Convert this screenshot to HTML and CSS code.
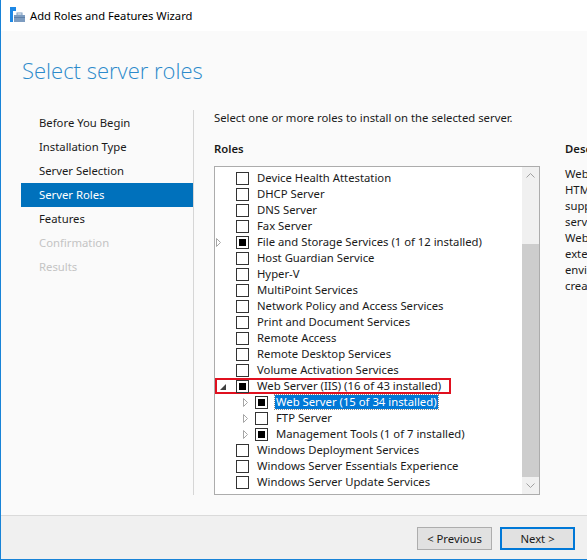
FILE: index.html
```html
<!DOCTYPE html>
<html lang="en">
<head>
<meta charset="utf-8">
<title>Add Roles and Features Wizard</title>
<link rel="stylesheet" href="styles.css">
</head>
<body>
<div class="window">
  <header class="titlebar">
    <svg class="app-icon" width="17" height="16" viewBox="0 0 17 16">
      <rect x="1" y="0" width="6" height="4" fill="#1e88e5"/>
      <rect x="1" y="4" width="3" height="11" fill="#1e88e5"/>
      <rect x="5" y="8" width="11" height="7" fill="#7d9cc0"/>
      <rect x="8" y="6" width="5" height="2" fill="none" stroke="#7d9cc0" stroke-width="1"/>
      <rect x="5" y="10" width="11" height="1" fill="#5f80a8"/>
    </svg>
    <span class="title">Add Roles and Features Wizard</span>
  </header>

  <main class="content">
    <h1 class="page-title">Select server roles</h1>
    <div class="columns">
      <nav class="steps">
        <div class="step">Before You Begin</div>
        <div class="step">Installation Type</div>
        <div class="step">Server Selection</div>
        <div class="step current">Server Roles</div>
        <div class="step">Features</div>
        <div class="step disabled">Confirmation</div>
        <div class="step disabled">Results</div>
      </nav>

      <section class="pane">
        <p class="intro">Select one or more roles to install on the selected server.</p>
        <div class="label">Roles</div>
        <div class="label">Description</div>

        <div class="listbox">
          <div class="viewport">
            <ul class="tree">
              <li class="row"><span class="exp"></span><span class="cb"></span>Device Health Attestation</li>
              <li class="row"><span class="exp"></span><span class="cb"></span>DHCP Server</li>
              <li class="row"><span class="exp"></span><span class="cb"></span>DNS Server</li>
              <li class="row"><span class="exp"></span><span class="cb"></span>Fax Server</li>
              <li class="row"><span class="exp"><svg class="tri-closed" width="5" height="9" viewBox="0 0 5 9"><path d="M0.5 0.5 L4.5 4.5 L0.5 8.5 Z" fill="none" stroke="#a6a6a6"/></svg></span><span class="cb partial"></span>File and Storage Services (1 of 12 installed)</li>
              <li class="row"><span class="exp"></span><span class="cb"></span>Host Guardian Service</li>
              <li class="row"><span class="exp"></span><span class="cb"></span>Hyper-V</li>
              <li class="row"><span class="exp"></span><span class="cb"></span>MultiPoint Services</li>
              <li class="row"><span class="exp"></span><span class="cb"></span>Network Policy and Access Services</li>
              <li class="row"><span class="exp"></span><span class="cb"></span>Print and Document Services</li>
              <li class="row"><span class="exp"></span><span class="cb"></span>Remote Access</li>
              <li class="row"><span class="exp"></span><span class="cb"></span>Remote Desktop Services</li>
              <li class="row"><span class="exp"></span><span class="cb"></span>Volume Activation Services</li>
              <li class="row marked"><span class="exp"><svg class="tri-open" width="6" height="6" viewBox="0 0 6 6"><path d="M6 0 L6 6 L0 6 Z" fill="#404040"/></svg></span><span class="cb partial"></span>Web Server (IIS) (16 of 43 installed)</li>
              <li class="row sub"><span class="exp"><svg class="tri-closed" width="5" height="9" viewBox="0 0 5 9"><path d="M0.5 0.5 L4.5 4.5 L0.5 8.5 Z" fill="none" stroke="#a6a6a6"/></svg></span><span class="cb partial"></span><span class="sel">Web Server (15 of 34 installed)</span></li>
              <li class="row sub"><span class="exp"><svg class="tri-closed" width="5" height="9" viewBox="0 0 5 9"><path d="M0.5 0.5 L4.5 4.5 L0.5 8.5 Z" fill="none" stroke="#a6a6a6"/></svg></span><span class="cb"></span>FTP Server</li>
              <li class="row sub"><span class="exp"><svg class="tri-closed" width="5" height="9" viewBox="0 0 5 9"><path d="M0.5 0.5 L4.5 4.5 L0.5 8.5 Z" fill="none" stroke="#a6a6a6"/></svg></span><span class="cb partial"></span>Management Tools (1 of 7 installed)</li>
              <li class="row"><span class="exp"></span><span class="cb"></span>Windows Deployment Services</li>
              <li class="row"><span class="exp"></span><span class="cb"></span>Windows Server Essentials Experience</li>
              <li class="row"><span class="exp"></span><span class="cb"></span>Windows Server Update Services</li>
            </ul>
          </div>
          <div class="scrollbar">
            <div class="sb-btn"><svg width="9" height="5" viewBox="0 0 9 5"><path d="M0.5 4.5 L4.5 0.5 L8.5 4.5" fill="none" stroke="#a0a0a0"/></svg></div>
            <div class="sb-track-top"></div>
            <div class="sb-thumb"></div>
            <div class="sb-btn"><svg width="9" height="5" viewBox="0 0 9 5"><path d="M0.5 0.5 L4.5 4.5 L8.5 0.5" fill="none" stroke="#a0a0a0"/></svg></div>
          </div>
        </div>

        <div class="desc">Web Server provides support for<br>HTML Web sites and optional<br>support for ASP.NET, ASP, and Web<br>server extensions. You can use the<br>Web Server to host an internal or<br>external Web site or to provide an<br>environment for developers to<br>create Web-based applications.</div>
      </section>
    </div>
  </main>

  <footer class="buttons">
    <button class="btn">&lt; Previous</button>
    <button class="btn default">Next &gt;</button>
    <button class="btn gap">Install</button>
    <button class="btn">Cancel</button>
  </footer>
</div>
</body>
</html>
```

FILE: styles.css
```css
html, body {
  margin: 0;
  padding: 0;
  overflow: hidden;
  background: #fafafa;
}

body {
  width: 587px;
  height: 560px;
  font-family: "Segoe UI", "Noto Sans", "Open Sans", sans-serif;
  font-size: 11.3px;
  color: #1a1a1a;
}

.window {
  width: 800px;
  height: 559px;
  border-left: 1px solid #1883d7;
  border-bottom: 1px solid #1883d7;
  display: flex;
  flex-direction: column;
  background: #fafafa;
}

/* title bar */
.titlebar {
  height: 31px;
  flex: none;
  background: #ffffff;
  display: flex;
  align-items: center;
  padding-left: 8px;
  box-sizing: border-box;
}

.app-icon {
  margin-top: -2px;
  margin-right: 4px;
}

.title {
  font-size: 11.2px;
  color: #000;
}

/* body of the wizard page */
.content {
  flex: 1;
  display: flex;
  flex-direction: column;
  min-height: 0;
}

.page-title {
  margin: 0;
  padding: 23px 0 0 21px;
  height: 56px;
  box-sizing: border-box;
  font-family: "Segoe UI Light", "Open Sans", "Noto Sans", sans-serif;
  font-weight: 300;
  font-size: 22px;
  line-height: 32px;
  color: #2c8acb;
}

.columns {
  margin-top: 23px;
  display: flex;
  height: 385px;
}

/* step navigation */
.steps {
  flex: none;
  width: 193px;
  padding: 1px 0 0 20px;
  box-sizing: border-box;
  border-right: 1px solid #d6d6d6;
}

.step {
  height: 24px;
  line-height: 24px;
  padding-left: 18px;
  white-space: nowrap;
  color: #1a1a1a;
}

.step.current {
  background: #0071bc;
  color: #ffffff;
}

.step.disabled {
  color: #c4c4c4;
}

/* main pane */
.pane {
  flex: none;
  padding-left: 20px;
  display: grid;
  grid-template-columns: 326px 300px;
  grid-template-rows: 16px auto 1fr;
  column-gap: 25px;
  align-items: start;
}

.intro {
  grid-column: 1 / span 2;
  margin: 0;
  line-height: 16px;
  white-space: nowrap;
}

.label {
  margin-top: 15px;
  line-height: 16px;
  font-weight: 600;
}

.listbox {
  margin-top: 9px;
  height: 329px;
  box-sizing: border-box;
  border: 1px solid #acacac;
  background: #ffffff;
  display: flex;
  align-self: start;
}

.viewport {
  flex: 1;
  margin-top: 5px;
  overflow: hidden;
}

.tree {
  list-style: none;
  margin: -2px 0 0 0;
  padding: 0;
}

.row {
  height: 16px;
  line-height: 16px;
  display: flex;
  align-items: center;
  white-space: nowrap;
}

.row.sub {
  padding-left: 19px;
}

.exp {
  width: 21px;
  height: 16px;
  flex: none;
  display: flex;
  align-items: center;
}

.tri-closed {
  margin-left: 1px;
}

.row.sub .tri-closed {
  margin-left: 9px;
}

.tri-open {
  margin-left: 5px;
  margin-top: 1px;
}

.cb {
  width: 13px;
  height: 13px;
  flex: none;
  box-sizing: border-box;
  border: 1px solid #333333;
  background: #ffffff;
  margin-right: 8px;
  display: flex;
  align-items: center;
  justify-content: center;
}

.cb.partial::after {
  content: "";
  width: 7px;
  height: 7px;
  background: #000000;
}

.row.marked {
  width: fit-content;
  padding-right: 10px;
  box-shadow: inset 0 0 0 2px #e0101f;
}

.sel {
  margin-left: -1px;
  padding: 0 1px;
  line-height: 14px;
  background: #0078d7;
  color: #ffffff;
  outline: 1px dotted #8a8a8a;
}

/* vertical scrollbar */
.scrollbar {
  width: 17px;
  flex: none;
  display: flex;
  flex-direction: column;
  background: #f0f0f0;
}

.sb-btn {
  height: 17px;
  flex: none;
  display: flex;
  align-items: center;
  justify-content: center;
}

.sb-track-top {
  height: 60px;
  flex: none;
}

.sb-thumb {
  flex: 1;
  background: #cdcdcd;
}

/* description column */
.desc {
  margin-top: 9px;
  line-height: 16px;
  white-space: nowrap;
}

/* button strip */
.buttons {
  flex: none;
  height: 44px;
  box-sizing: border-box;
  border-top: 1px solid #dadada;
  background: #f0f0f0;
  display: flex;
  align-items: flex-start;
  padding: 11px 0 0 416px;
  gap: 8px;
}

.btn {
  width: 75px;
  height: 23px;
  font-family: inherit;
  font-size: 11.3px;
  color: #1a1a1a;
  background: #e1e1e1;
  border: 1px solid #adadad;
  padding: 0;
}

.btn.default {
  border: 2px solid #0078d7;
}

.btn.gap {
  margin-left: 10px;
}
```
